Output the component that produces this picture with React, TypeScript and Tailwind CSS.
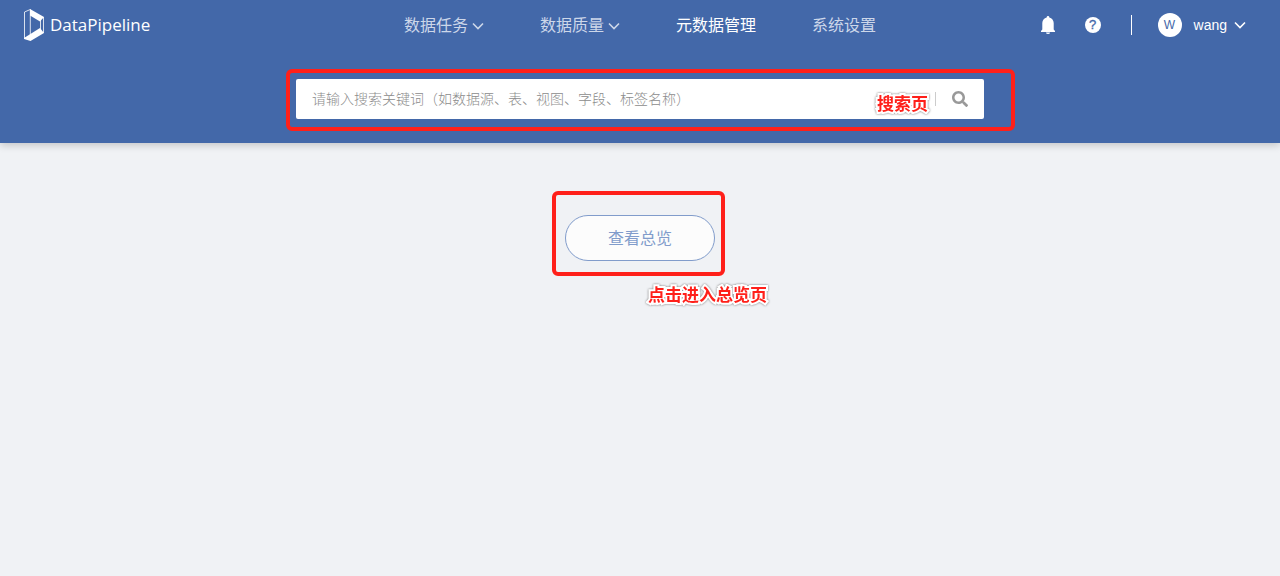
import React from 'react';
import { FaSearch } from 'react-icons/fa';

interface NavItem {
  label: string;
  hasMenu?: boolean;
  active?: boolean;
}

const navItems: NavItem[] = [
  { label: '数据任务', hasMenu: true },
  { label: '数据质量', hasMenu: true },
  { label: '元数据管理', active: true },
  { label: '系统设置' },
];

const Logo: React.FC = () => (
  <svg width="20" height="32" viewBox="0 0 20 32" fill="none" aria-hidden="true">
    <path d="M6.3 0.5 0.5 3V29.5L6.3 26.5Z" stroke="#fff" strokeOpacity="0.8" />
    <path d="M6 0 20 8 16 12.5 6 6.5Z" fill="#fff" />
    <path d="M0 29 16 19 20 24 6.5 32 0 30Z" fill="#fff" />
    <path d="M16.5 11V20M19.5 8V24" stroke="#fff" strokeOpacity="0.8" />
  </svg>
);

const Bell: React.FC = () => (
  <svg width="14" height="18" viewBox="0 0 14 18" fill="currentColor" aria-hidden="true">
    <path d="M7 0a1.3 1.3 0 0 1 1.3 1.4C11 2 12.7 4.2 12.7 7v6.4L14 15v1H0v-1l1.3-1.6V7C1.3 4.2 3 2 5.7 1.4A1.3 1.3 0 0 1 7 0Z" />
    <path d="M5 16.4h4A2 1.6 0 0 1 5 16.4Z" />
  </svg>
);

const Chevron: React.FC = () => (
  <svg width="12" height="8" viewBox="0 0 12 8" fill="none" stroke="currentColor" strokeWidth="1.6" aria-hidden="true">
    <path d="M1 1.5 6 6.5 11 1.5" />
  </svg>
);

const Header: React.FC = () => (
  <div className="grid h-[50px] grid-cols-[1fr_auto_1fr] items-center px-6">
    <a href="#" className="flex items-center gap-1.5 justify-self-start font-['Open_Sans',sans-serif] text-[17px] text-white">
      <Logo />
      DataPipeline
    </a>
    <nav className="flex items-center gap-14 pt-0.5 text-base">
      {navItems.map((item) => (
        <a
          key={item.label}
          href="#"
          className={`flex items-center gap-1 whitespace-nowrap ${item.active ? 'text-white' : 'text-[#cdd7e9]'}`}
        >
          {item.label}
          {item.hasMenu && <Chevron />}
        </a>
      ))}
    </nav>
    <div className="flex items-center justify-self-end pr-2.5 text-white">
      <button type="button" aria-label="通知">
        <Bell />
      </button>
      <button
        type="button"
        aria-label="帮助"
        className="ml-[30px] flex size-4 items-center justify-center rounded-full bg-white text-[13px] text-[#4368a9] [-webkit-text-stroke:0.3px]"
      >
        ?
      </button>
      <span className="ml-[30px] h-5 w-px bg-white" />
      <button type="button" className="ml-[26px] flex items-center text-sm">
        <span className="mr-3 flex size-6 items-center justify-center rounded-full bg-white text-xs text-[#4368a9]">W</span>
        <span className="mr-[7px]">wang</span>
        <Chevron />
      </button>
    </div>
  </div>
);

const Frame: React.FC<{ className: string }> = ({ className }) => (
  <div className={`pointer-events-none absolute rounded-md border-4 border-[#ff201a] ${className}`} />
);

const Note: React.FC<{ text: string; className: string }> = ({ text, className }) => (
  <span
    className={`pointer-events-none absolute whitespace-nowrap text-[17px] leading-6 font-bold text-[#ff201a] [-webkit-text-stroke:4px_white] [paint-order:stroke_fill] [filter:drop-shadow(0_0_1px_#777)] ${className}`}
  >
    {text}
  </span>
);

const SearchBar: React.FC = () => (
  <div className="relative mx-auto mt-[29px] max-w-[688px]">
    <form className="flex h-10 items-center rounded-xs bg-white pr-4 pl-4">
      <input
        type="text"
        aria-label="搜索"
        placeholder="请输入搜索关键词（如数据源、表、视图、字段、标签名称）"
        className="min-w-0 flex-1 text-sm font-light outline-none placeholder:text-[#8c8c8c]"
      />
      <span className="h-3.5 w-px bg-[#ccc]" />
      <button type="submit" aria-label="搜索" className="ml-4 text-[#999]">
        <FaSearch size={16} />
      </button>
    </form>
    <Frame className="-top-2.5 -right-[31px] -bottom-3 -left-2.5" />
    <Note text="搜索页" className="top-3.5 right-14" />
  </div>
);

export default function App() {
  return (
    <div className="min-h-screen bg-[#f0f2f5] font-['Liberation_Sans','Noto_Sans_CJK_SC',sans-serif]">
      <header className="bg-[#4368a9] pb-6 shadow-[0_2px_8px_rgba(0,0,0,0.2)]">
        <Header />
        <SearchBar />
      </header>
      <main className="flex justify-center pt-[72px]">
        <div className="relative">
          <button
            type="button"
            className="h-[46px] w-[150px] rounded-full border border-[#819ccb] bg-[#fcfcfc] pt-0.5 text-base text-[#819ccb]"
          >
            查看总览
          </button>
          <Frame className="-top-6 -right-2.5 -bottom-[15px] -left-[13px]" />
          <Note text="点击进入总览页" className="top-[69px] left-[83px]" />
        </div>
      </main>
    </div>
  );
}
